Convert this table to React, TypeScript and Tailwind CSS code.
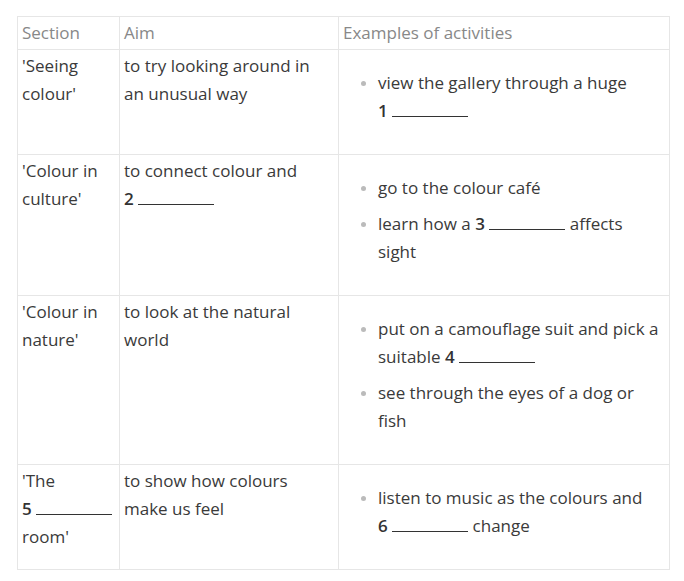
import React from 'react';

const Blank = ({ n }: { n: number }) => (
  <span className="whitespace-nowrap">
    <span className="font-semibold text-[#333]">{n}</span>{' '}
    <span className="inline-block w-[76px] border-b border-[#333] h-[1em] align-baseline"></span>
  </span>
);

const rows: { section: React.ReactNode; aim: React.ReactNode; items: React.ReactNode[] }[] = [
  {
    section: "'Seeing colour'",
    aim: 'to try looking around in an unusual way',
    items: [<>view the gallery through a huge <Blank n={1} /></>],
  },
  {
    section: "'Colour in culture'",
    aim: <>to connect colour and <Blank n={2} /></>,
    items: [<>go to the colour café</>, <>learn how a <Blank n={3} /> affects sight</>],
  },
  {
    section: "'Colour in nature'",
    aim: 'to look at the natural world',
    items: [
      <>put on a camouflage suit and pick a suitable <Blank n={4} /></>,
      <>see through the eyes of a dog or fish</>,
    ],
  },
  {
    section: <>'The <Blank n={5} /> room'</>,
    aim: 'to show how colours make us feel',
    items: [<>listen to music as the colours and <Blank n={6} /> change</>],
  },
];

export default function App() {
  return (
    <div className="w-[684px] h-[581px] bg-white pt-[16px] pl-[17px]" style={{ fontFamily: '"Open Sans", sans-serif' }}>
      <table className="border-collapse table-fixed text-[17px] leading-[28px] text-[#3a3a3a] w-[653px]">
        <thead>
          <tr>
            <th className="w-[102px] border border-[#e6e6e6] text-left font-normal text-[#888] pl-[4px] pr-[4px] py-[2px] align-top">Section</th>
            <th className="w-[219px] border border-[#e6e6e6] text-left font-normal text-[#888] pl-[4px] pr-[12px] py-[2px] align-top">Aim</th>
            <th className="border border-[#e6e6e6] text-left font-normal text-[#888] pl-[4px] pr-[4px] py-[2px] align-top">Examples of activities</th>
          </tr>
        </thead>
        <tbody>
          {rows.map((r, i) => (
            <tr key={i}>
              <td className="border border-[#e6e6e6] pl-[4px] pr-[2px] pt-[2px] align-top">{r.section}</td>
              <td className="border border-[#e6e6e6] pl-[4px] pr-[12px] pt-[2px] align-top">{r.aim}</td>
              <td className="border border-[#e6e6e6] pl-[4px] pr-[4px] pt-[2px] align-top">
                <ul className="mt-[17px] mb-[29px] pl-[35px]">
                  {r.items.map((it, j) => (
                    <li key={j} className="relative mt-[8px] first:mt-0">
                      <span className="absolute left-[-17px] top-[12px] w-[5px] h-[5px] rounded-full bg-[#bbb]"></span>
                      {it}
                    </li>
                  ))}
                </ul>
              </td>
            </tr>
          ))}
        </tbody>
      </table>
    </div>
  );
}
